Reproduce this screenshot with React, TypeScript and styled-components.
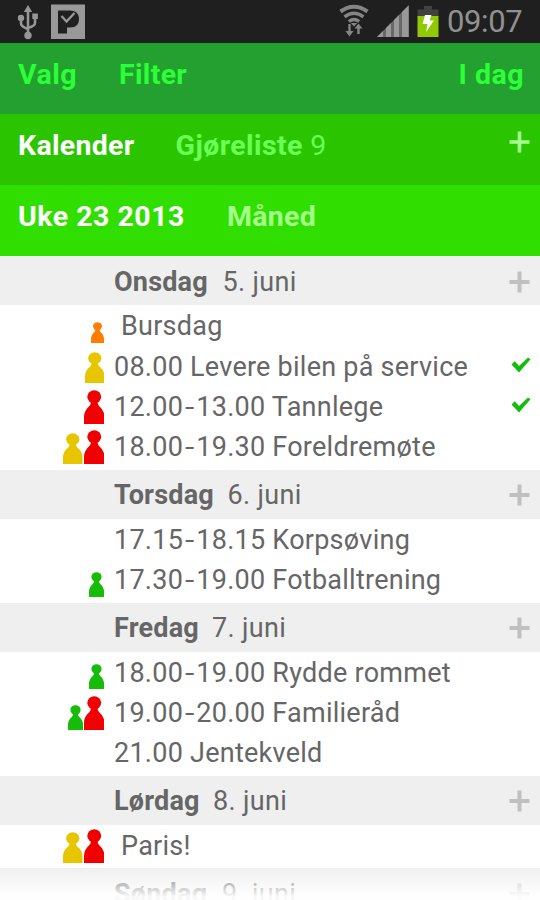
import React from 'react';
import styled, { createGlobalStyle } from 'styled-components';

const GlobalStyle = createGlobalStyle`
  * { box-sizing: border-box; }
  body { margin: 0; background: #fff; font-family: Roboto, "Liberation Sans", sans-serif; }
`;

const Screen = styled.main`
  position: relative;
  display: flex;
  flex-direction: column;
  width: 540px;
  height: 900px;
  overflow: hidden;
  background: #fff;
`;

const StatusBar = styled.header`
  flex: none;
  display: flex;
  justify-content: space-between;
  height: 43px;
  padding: 0 18px 0 16px;
  background: #1f1f1f;
  border-bottom: 1px solid #172a19;
`;

const StatusGroup = styled.div<{ $gap: number }>`
  display: flex;
  align-items: flex-start;
  gap: ${(p) => p.$gap}px;
`;

const Clock = styled.time`
  width: 75px;
  margin-left: 1px;
  font-size: 31px;
  line-height: 43px;
  letter-spacing: -0.4px;
  white-space: nowrap;
  color: #919191;
`;

const Bar = styled.nav<{ $bg: string; $height: number }>`
  flex: none;
  display: flex;
  align-items: flex-start;
  height: ${(p) => p.$height}px;
  padding: 15px 16px 0 18px;
  background: ${(p) => p.$bg};
`;

const Tab = styled.span<{ $color: string; $gap?: number; $spacing?: number }>`
  margin-right: ${(p) => p.$gap ?? 0}px;
  font-size: 28.5px;
  font-weight: 700;
  line-height: 33px;
  letter-spacing: ${(p) => p.$spacing ?? 0.3}px;
  white-space: nowrap;
  color: ${(p) => p.$color};
`;

const Count = styled.span`
  font-weight: 400;
`;

const Trailing = styled.div<{ $shift?: number; $drop?: number }>`
  display: flex;
  margin-left: auto;
  margin-right: ${(p) => p.$shift ?? 0}px;
  padding-top: ${(p) => p.$drop ?? 0}px;
`;

const DayHeader = styled.div`
  display: flex;
  align-items: center;
  height: 49px;
  padding: 2px 10px 0 114px;
  background: #efefef;
  font-size: 27px;
  color: #666;
  white-space: nowrap;
`;

const DayName = styled.strong<{ $width: number }>`
  width: ${(p) => p.$width}px;
  letter-spacing: 0.2px;
  font-weight: 700;
`;

const DayDate = styled.span`
  flex: 1;
  letter-spacing: 0.35px;
`;

const DayBody = styled.ul`
  margin: 0;
  padding: 1px 0 2px;
  list-style: none;
`;

const EventRow = styled.li`
  display: flex;
  height: 40.4px;
  padding-right: 9px;
`;

const People = styled.div`
  display: flex;
  align-items: flex-end;
  justify-content: flex-end;
  gap: 1px;
  width: 104px;
  padding-bottom: 3.5px;
`;

const EventText = styled.span<{ $allDay: boolean }>`
  flex: 1;
  padding-left: ${(p) => (p.$allDay ? 17 : 10)}px;
  font-size: 27px;
  line-height: 40.4px;
  letter-spacing: 0.25px;
  white-space: nowrap;
  color: #666;
`;

const Dash = styled.span`
  display: inline-block;
  margin: 0 3px 0 2.5px;
  transform: scaleX(1.25);
`;

const CheckSlot = styled.div`
  display: flex;
  align-items: center;
  padding-bottom: 4px;
`;

const Fade = styled.div`
  position: absolute;
  left: 0;
  right: 0;
  bottom: 0;
  height: 34px;
  background: linear-gradient(rgba(255, 255, 255, 0), rgba(255, 255, 255, 0.95) 90%);
`;

const Plus = ({ color, stroke = 4 }: { color: string; stroke?: number }) => (
  <svg width="21" height="22" viewBox="0 0 21 22">
    <path d="M10.5 .5v21M.5 11h20" stroke={color} strokeWidth={stroke} />
  </svg>
);

const Check = () => (
  <svg width="20" height="16" viewBox="0 0 20 16">
    <path d="M3.800 4.200.5 7.500 8 15.500 19.500 2.200 17 .500 8 9z" fill="#12bd0b" />
  </svg>
);

const UsbIcon = () => (
  <svg width="24" height="42" viewBox="0 0 24 42" fill="none" stroke="#969696" strokeWidth="2.6">
    <path d="M12 10v26M5 18v5.500q0 3 7 5.500M19 17v6q0 3-7 5" />
    <circle cx="12" cy="35.500" r="3.700" fill="#969696" stroke="none" />
    <circle cx="5" cy="18" r="3.200" fill="#969696" stroke="none" />
    <path d="M12 5l4.200 7H7.800zM16.300 13.500h5.600v5.600h-5.600z" fill="#969696" stroke="none" />
  </svg>
);

const AppBadge = () => (
  <svg width="36" height="42" viewBox="0 0 36 42">
    <rect x="0" y="4.500" width="34" height="34.500" fill="#999" />
    <path d="M7 10.500h12c6 0 9 3.500 9 8.500s-3 8.500-9 8.500h-3v6H7z" fill="#202020" />
    <path d="M10.500 16l5 5.500L23.500 13" fill="none" stroke="#999" strokeWidth="2.300" />
  </svg>
);

const WifiIcon = () => (
  <svg width="32" height="42" viewBox="0 0 32 42" fill="none" stroke="#858585">
    <path d="M2.500 11.500q13.500-9.500 27 0" strokeWidth="4" />
    <path d="M6.500 16.800q9.500-7 19 0M10.800 21.500q5.200-3.800 10.400 0" strokeWidth="3.400" />
    <path d="M12.800 23h6.400L16 26.500z" fill="#858585" stroke="none" />
    <path d="M11.500 24v8M20.500 34v-7" strokeWidth="2.400" />
    <path d="M7.500 31h8l-4 5.500zM16.500 28.500h8l-4-5z" fill="#858585" stroke="none" />
  </svg>
);

const SignalIcon = () => (
  <svg width="33" height="42" viewBox="0 0 33 42">
    <path d="M0 37 32 5v32z" fill="#686868" />
    <path d="M0 37l6-6v6zM9 28l5-5v14H9zM17 20l5-5v22h-5zM25 12l6.500-6.500V37H25z" fill="#989898" />
  </svg>
);

const BatteryIcon = () => (
  <svg width="22" height="42" viewBox="0 0 22 42">
    <path d="M7 6h8v3.500h6.500V17H.5V9.500H7z" fill="#414141" />
    <path d="M.5 16h21v21H.5z" fill="#91ca05" />
    <path d="M8 15h6.500l-2 5.500H17L9 32l1.500-8H5.500z" fill="#fff" />
  </svg>
);

type PersonKind = 'orange' | 'yellow' | 'red' | 'green';

const persons: Record<PersonKind, { color: string; w: number; h: number }> = {
  orange: { color: '#ff7d00', w: 13, h: 21.5 },
  green: { color: '#16bc08', w: 15, h: 25 },
  yellow: { color: '#e7c600', w: 19.5, h: 31 },
  red: { color: '#f00000', w: 20.5, h: 34 },
};

const Person = ({ kind }: { kind: PersonKind }) => {
  const { color, w, h } = persons[kind];
  return (
    <svg width={w} height={h} viewBox="0 0 20 34" preserveAspectRatio="none" fill={color}>
      <ellipse cx="10" cy="6.800" rx="6.800" ry="6.600" />
      <path d="M6.500 11.500h7q-.6 2.800 1.200 4.500Q20 20.500 20 27v7H0v-7q0-6.500 5.300-11 1.800-1.700 1.200-4.500z" />
    </svg>
  );
};

interface CalendarEvent {
  start?: string;
  end?: string;
  title: string;
  people?: PersonKind[];
  done?: boolean;
}

interface Day {
  name: string;
  date: string;
  width: number;
  events: CalendarEvent[];
}

const days: Day[] = [
  {
    name: 'Onsdag', date: '5. juni', width: 108.5,
    events: [
      { title: 'Bursdag', people: ['orange'] },
      { start: '08.00', title: 'Levere bilen på service', people: ['yellow'], done: true },
      { start: '12.00', end: '13.00', title: 'Tannlege', people: ['red'], done: true },
      { start: '18.00', end: '19.30', title: 'Foreldremøte', people: ['yellow', 'red'] },
    ],
  },
  {
    name: 'Torsdag', date: '6. juni', width: 113.5,
    events: [
      { start: '17.15', end: '18.15', title: 'Korpsøving' },
      { start: '17.30', end: '19.00', title: 'Fotballtrening', people: ['green'] },
    ],
  },
  {
    name: 'Fredag', date: '7. juni', width: 98,
    events: [
      { start: '18.00', end: '19.00', title: 'Rydde rommet', people: ['green'] },
      { start: '19.00', end: '20.00', title: 'Familieråd', people: ['green', 'red'] },
      { start: '21.00', title: 'Jentekveld' },
    ],
  },
  {
    name: 'Lørdag', date: '8. juni', width: 99,
    events: [{ title: 'Paris!', people: ['yellow', 'red'] }],
  },
  { name: 'Søndag', date: '9. juni', width: 108, events: [] },
];

export default function App() {
  return (
    <>
      <GlobalStyle />
      <Screen>
        <StatusBar>
          <StatusGroup $gap={11}>
            <UsbIcon />
            <AppBadge />
          </StatusGroup>
          <StatusGroup $gap={7}>
            <WifiIcon />
            <SignalIcon />
            <BatteryIcon />
            <Clock>09:07</Clock>
          </StatusGroup>
        </StatusBar>
        <Bar $bg="#23a030" $height={71}>
          <Tab $color="#2bff35" $gap={42} $spacing={0.5}>Valg</Tab>
          <Tab $color="#2bff35">Filter</Tab>
          <Trailing><Tab $color="#2bff35" $spacing={0.5}>I dag</Tab></Trailing>
        </Bar>
        <Bar $bg="#2bc500" $height={71}>
          <Tab $color="#fff" $gap={41}>Kalender</Tab>
          <Tab $color="#6bff59" $spacing={0.4}>Gjøreliste <Count>9</Count></Tab>
          <Trailing $shift={-6} $drop={1.5}><Plus color="#a5ff93" stroke={3.6} /></Trailing>
        </Bar>
        <Bar $bg="#30df00" $height={71.2}>
          <Tab $color="#fff" $gap={42} $spacing={0.5}>Uke 23 2013</Tab>
          <Tab $color="#a4ff8b">Måned</Tab>
        </Bar>
        {days.map((day) => (
          <section key={day.name}>
            <DayHeader>
              <DayName $width={day.width}>{day.name}</DayName>
              <DayDate>{day.date}</DayDate>
              <Plus color="#c0c0c0" />
            </DayHeader>
            {day.events.length > 0 && (
              <DayBody>
                {day.events.map((event) => (
                  <EventRow key={event.title}>
                    <People>
                      {event.people?.map((kind) => <Person key={kind} kind={kind} />)}
                    </People>
                    <EventText $allDay={!event.start}>
                      {event.start}
                      {event.end && <><Dash>-</Dash>{event.end}</>}
                      {event.start && ' '}
                      {event.title}
                    </EventText>
                    {event.done && <CheckSlot><Check /></CheckSlot>}
                  </EventRow>
                ))}
              </DayBody>
            )}
          </section>
        ))}
        <Fade />
      </Screen>
    </>
  );
}
